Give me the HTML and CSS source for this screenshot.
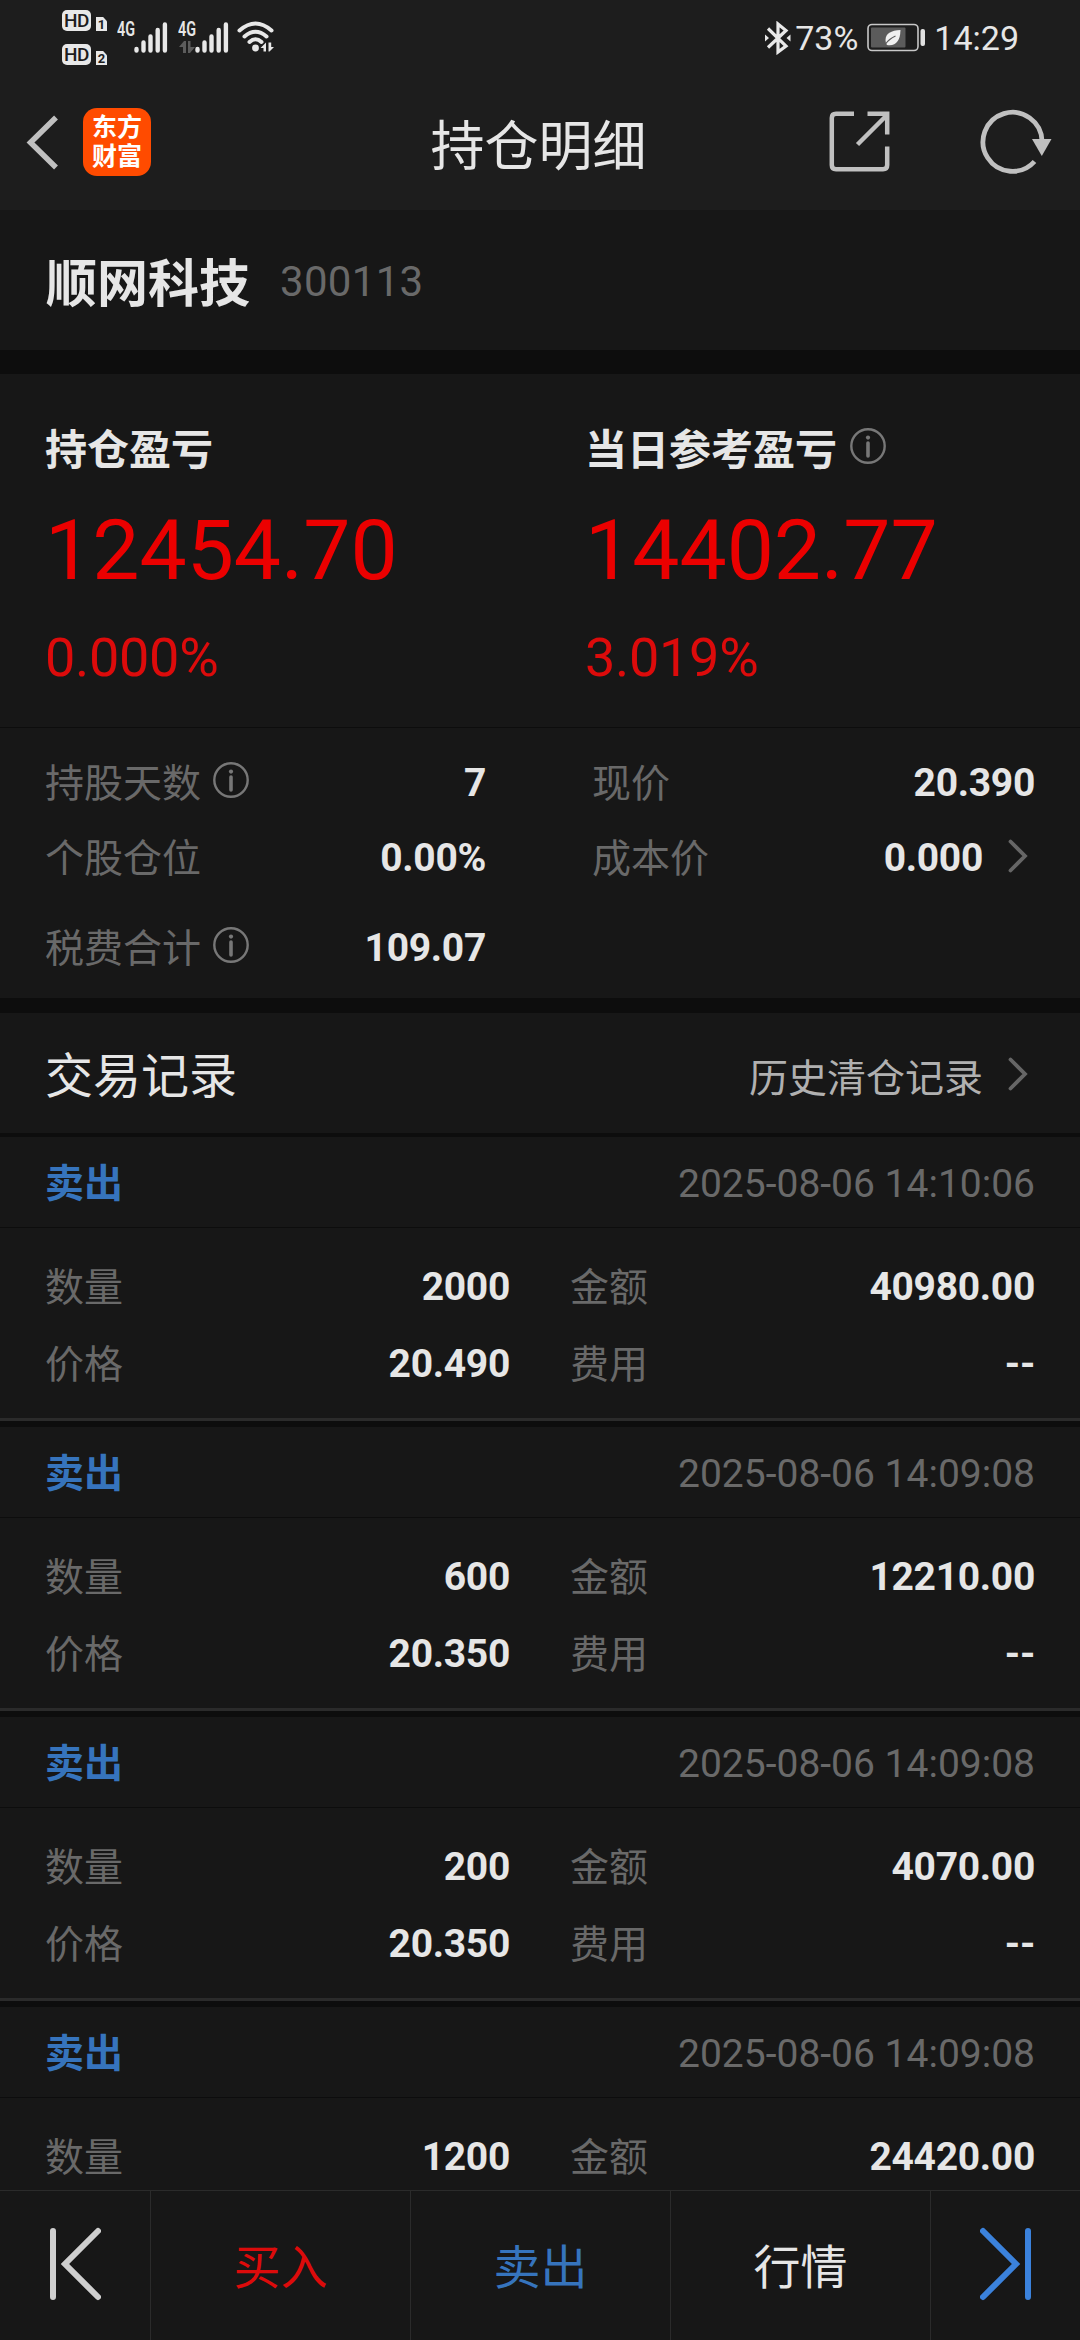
FILE: index.html
```html
<!DOCTYPE html>
<html lang="zh-CN">
<head>
  <meta charset="UTF-8">
  <meta name="viewport" content="width=device-width, initial-scale=1.0">
  <title>持仓明细</title>
  <link rel="stylesheet" href="styles.css">
</head>
<body>
  <svg class="defs" width="0" height="0">
    <symbol id="info" viewBox="0 0 36 36">
      <circle cx="18" cy="18" r="16.7" fill="none" stroke="#777" stroke-width="2.4"/>
      <circle cx="18" cy="9.6" r="2.1" fill="#777"/>
      <path d="M18 15v13" stroke="#777" stroke-width="3.6" stroke-linecap="round"/>
    </symbol>
    <symbol id="more" viewBox="0 0 20 34">
      <path d="M2.5 2.5L17 17L2.5 31.5" fill="none" stroke="#666" stroke-width="3.8" stroke-linecap="round"/>
    </symbol>
    <symbol id="signal" viewBox="0 0 34 31">
      <path d="M2.5 27v1.500M9.500 20.500v8M16.500 14.500v14M23.700 8v20.500M30.900 2.500v26" stroke="#e8e8e8" stroke-width="4.400" stroke-linecap="round"/>
    </symbol>
  </svg>

  <div class="status-bar">
    <div class="status-left">
      <div class="hd-list">
        <div class="hd"><span class="hd-tag">HD</span><span class="sim">1</span></div>
        <div class="hd"><span class="hd-tag">HD</span><span class="sim">2</span></div>
      </div>
      <div class="network">
        <span class="net-type">4G</span>
        <svg class="bars" width="34" height="31"><use href="#signal"/></svg>
      </div>
      <div class="network second">
        <span class="net-type">4G</span>
        <svg class="updown" width="16" height="12" viewBox="0 0 16 12" fill="#5c5c5c"><path d="M0 6L5 0H7V12H4V6ZM9 0h2.500v6H16L11 12H9Z"/></svg>
        <svg class="bars" width="34" height="31"><use href="#signal"/></svg>
      </div>
      <svg class="wifi" width="38" height="32" viewBox="0 0 38 32">
        <g fill="none" stroke="#e8e8e8" stroke-width="4" stroke-linecap="round">
          <path d="M2.500 9.500Q18.500 -4.500 34.500 9.500"/>
          <path d="M7.500 15.500Q18.500 6 29.500 15.500"/>
          <path d="M12.500 21Q18.500 15.500 24.500 21"/>
        </g>
        <circle cx="18.500" cy="27" r="3.400" fill="#e8e8e8"/>
        <path d="M23.500 27L29 21.500V30.500H26.500V27ZM31.500 21.500V30.500H32.500L37 26H34.200V21.500Z" fill="#e8e8e8"/>
      </svg>
    </div>
    <div class="status-right">
      <svg width="26" height="34" viewBox="0 0 26 34">
        <path d="M3 7.500L21 25L13 31V3L21 9.500L3 26.500" fill="none" stroke="#e8e8e8" stroke-width="3.200"/>
        <path d="M0 13.500L4 17L0 20.500ZM25.500 13.500L21.500 17L25.500 20.500Z" fill="#e8e8e8"/>
      </svg>
      <span class="percent">73%</span>
      <svg class="battery" width="60" height="30" viewBox="0 0 60 30">
        <rect x="1" y="1.500" width="50" height="26" rx="4" fill="none" stroke="#c8c8c8" stroke-width="1.600"/>
        <rect x="4" y="4.500" width="34.500" height="20" rx="1" fill="#5b5b5b"/>
        <path d="M33.500 7C24 7.500 18.500 10.500 18.500 17Q18.500 20 20 22Q33 24 33.500 7Z" fill="#f0f0f0"/>
        <path d="M18.500 21Q22 16 28.500 13" fill="none" stroke="#5b5b5b" stroke-width="1.200"/>
        <rect x="53.500" y="6" width="4.500" height="17" rx="2" fill="#e0e0e0"/>
      </svg>
      <span class="clock">14:29</span>
    </div>
  </div>

  <header class="nav">
    <div class="nav-left">
      <svg width="34" height="56" viewBox="0 0 34 56"><path d="M31 3.500L5.500 28.500L31 53.500" fill="none" stroke="#c0c0c0" stroke-width="5.500"/></svg>
      <div class="logo"><span>东方</span><span>财富</span></div>
    </div>
    <h1>持仓明细</h1>
    <div class="nav-right">
      <svg width="62" height="62" viewBox="0 0 62 62" fill="none" stroke="#c0c0c0" stroke-width="4.500">
        <path d="M25 2.800H7Q2.800 2.800 2.800 7V54Q2.800 58.200 7 58.200H54Q58.200 58.200 58.200 54V35.500"/>
        <path d="M38.500 2.800H58.200V23.500M28.500 33.500L58 4"/>
      </svg>
      <svg width="72" height="66" viewBox="0 0 72 66">
        <path d="M62 32A29.500 29.500 0 1 0 54.500 52.500" fill="none" stroke="#c0c0c0" stroke-width="4.800"/>
        <path d="M52 30H71.500L61.800 47Z" fill="#c0c0c0"/>
      </svg>
    </div>
  </header>

  <section class="stock">
    <span class="stock-name">顺网科技</span>
    <span class="stock-code">300113</span>
  </section>

  <section class="summary">
    <div class="profit">
      <div class="profit-label">持仓盈亏</div>
      <div class="profit-value">12454.70</div>
      <div class="profit-rate">0.000%</div>
    </div>
    <div class="profit">
      <div class="profit-label">当日参考盈亏<svg class="info"><use href="#info"/></svg></div>
      <div class="profit-value">14402.77</div>
      <div class="profit-rate">3.019%</div>
    </div>
  </section>

  <section class="stats">
    <div class="field"><label>持股天数<svg class="info"><use href="#info"/></svg></label><b>7</b></div>
    <div class="field"><label>现价</label><b>20.390</b></div>
    <div class="field"><label>个股仓位</label><b>0.00%</b></div>
    <div class="field"><label>成本价</label><b>0.000</b><svg class="more"><use href="#more"/></svg></div>
    <div class="field"><label>税费合计<svg class="info"><use href="#info"/></svg></label><b>109.07</b></div>
  </section>

  <div class="section-title">
    <h2>交易记录</h2>
    <a class="history">历史清仓记录<svg class="more"><use href="#more"/></svg></a>
  </div>

  <main class="records">
    <article class="record">
      <div class="record-head"><span class="side">卖出</span><time>2025-08-06 14:10:06</time></div>
      <div class="record-body">
        <div class="field"><label>数量</label><b>2000</b></div>
        <div class="field"><label>金额</label><b>40980.00</b></div>
        <div class="field"><label>价格</label><b>20.490</b></div>
        <div class="field"><label>费用</label><b>--</b></div>
      </div>
    </article>
    <article class="record">
      <div class="record-head"><span class="side">卖出</span><time>2025-08-06 14:09:08</time></div>
      <div class="record-body">
        <div class="field"><label>数量</label><b>600</b></div>
        <div class="field"><label>金额</label><b>12210.00</b></div>
        <div class="field"><label>价格</label><b>20.350</b></div>
        <div class="field"><label>费用</label><b>--</b></div>
      </div>
    </article>
    <article class="record">
      <div class="record-head"><span class="side">卖出</span><time>2025-08-06 14:09:08</time></div>
      <div class="record-body">
        <div class="field"><label>数量</label><b>200</b></div>
        <div class="field"><label>金额</label><b>4070.00</b></div>
        <div class="field"><label>价格</label><b>20.350</b></div>
        <div class="field"><label>费用</label><b>--</b></div>
      </div>
    </article>
    <article class="record">
      <div class="record-head"><span class="side">卖出</span><time>2025-08-06 14:09:08</time></div>
      <div class="record-body">
        <div class="field"><label>数量</label><b>1200</b></div>
        <div class="field"><label>金额</label><b>24420.00</b></div>
      </div>
    </article>
  </main>

  <footer class="toolbar">
    <div class="tool">
      <svg width="52" height="74" viewBox="0 0 52 74" fill="none" stroke="#cfcfcf" stroke-width="6" stroke-linecap="round"><path d="M4 4V70M49 4L16 37L49 70"/></svg>
    </div>
    <div class="tool buy">买入</div>
    <div class="tool sell">卖出</div>
    <div class="tool">行情</div>
    <div class="tool">
      <svg width="52" height="74" viewBox="0 0 52 74" fill="none" stroke="#3b82dc" stroke-width="6" stroke-linecap="round"><path d="M48 4V70M3 4L36 37L3 70"/></svg>
    </div>
  </footer>
</body>
</html>
```

FILE: styles.css
```css
* {
  box-sizing: border-box;
}

body {
  margin: 0;
  width: 1080px;
  height: 2340px;
  overflow: hidden;
  display: flex;
  flex-direction: column;
  background: #171717;
  color: #e6e6e6;
  font-family: Roboto, "Noto Sans CJK SC", sans-serif;
  font-size: 39px;
}

svg {
  display: block;
  flex: none;
}

.defs {
  position: absolute;
}

/* status bar */
.status-bar {
  height: 74px;
  flex: none;
  background: #1d1d1d;
  display: flex;
  justify-content: space-between;
  padding: 0 61px 0 62px;
}

.status-left {
  display: flex;
  align-items: flex-start;
}

.hd-list {
  padding-top: 10px;
  width: 55px;
}

.hd {
  display: flex;
  align-items: flex-end;
  gap: 5px;
  height: 21px;
  margin-bottom: 13px;
}

.hd-tag {
  width: 29px;
  height: 21px;
  line-height: 21px;
  border-radius: 5px;
  background: #e8e8e8;
  color: #1d1d1d;
  font-size: 19px;
  font-weight: 500;
  letter-spacing: -0.5px;
  text-align: center;
}

.sim {
  width: 11px;
  height: 14px;
  line-height: 15px;
  background: #e8e8e8;
  color: #1d1d1d;
  font-size: 13px;
  font-weight: 700;
  text-align: center;
  clip-path: polygon(0 0, 65% 0, 100% 30%, 100% 100%, 0 100%);
}

.network {
  position: relative;
  width: 61px;
  height: 74px;
  padding: 21.500px 0 0 17px;
}

.net-type {
  position: absolute;
  left: 0;
  top: 19px;
  font-size: 20px;
  line-height: 20px;
  font-weight: 600;
  transform: scaleX(0.72);
  transform-origin: 0 0;
}

.updown {
  position: absolute;
  left: 1px;
  top: 41px;
}

.second {
  width: 59px;
}

.wifi {
  margin-top: 21px;
}

.status-right {
  display: flex;
  align-items: center;
  height: 74px;
  padding-top: 1px;
  font-size: 34px;
}

.percent {
  margin-left: 4px;
}

.battery {
  margin: 0 7px 0 9px;
}

/* navigation */
.nav {
  height: 136px;
  flex: none;
  background: #1d1d1d;
  display: grid;
  grid-template-columns: 1fr auto 1fr;
  align-items: center;
  padding: 0 28px 0 25px;
}

.nav-left,
.nav-right {
  display: flex;
  align-items: center;
}

.nav-left {
  gap: 24px;
}

.nav-right {
  justify-content: flex-end;
  gap: 89px;
}

.logo {
  width: 68px;
  height: 68px;
  border-radius: 14px;
  background: #ff4b00;
  color: #fff;
  display: flex;
  flex-direction: column;
  align-items: center;
  justify-content: center;
  font-size: 25px;
  font-weight: 700;
  line-height: 29px;
}

.nav h1 {
  margin: 0;
  font-size: 54px;
  font-weight: 400;
}

/* stock */
.stock {
  height: 140px;
  flex: none;
  display: flex;
  align-items: center;
  gap: 30px;
  padding-left: 46px;
}

.stock-name {
  margin-top: -1px;
  font-size: 51px;
  font-weight: 700;
}

.stock-code {
  padding-top: 2px;
  font-size: 42px;
  letter-spacing: 0.3px;
  color: #696969;
}

/* profit and loss */
.summary {
  height: 377px;
  flex: none;
  display: grid;
  grid-template-columns: 1fr 1fr;
  border-top: 24px solid #0d0d0d;
}

.profit {
  padding: 42px 0 0 45px;
}

.profit-label {
  display: flex;
  align-items: center;
  gap: 13px;
  height: 60px;
  font-size: 42px;
  font-weight: 700;
}

.info {
  width: 36px;
  height: 36px;
}

.profit-value {
  height: 100px;
  margin-top: 25px;
  line-height: 100px;
  font-size: 84px;
  color: #eb0000;
}

.profit-rate {
  height: 60px;
  margin-top: 27px;
  line-height: 60px;
  font-size: 54px;
  letter-spacing: -0.3px;
  color: #dc0b0b;
}

/* label and value pairs */
.stats {
  height: 286px;
  flex: none;
  display: grid;
  grid-template-columns: 441px 443px;
  grid-template-rows: 75px 75px 105px;
  column-gap: 106px;
  padding: 17px 45px 0;
  border-top: 1px solid #0d0d0d;
  border-bottom: 15px solid #0d0d0d;
}

.field {
  display: flex;
  align-items: center;
  justify-content: space-between;
}

.field label {
  display: flex;
  align-items: center;
  gap: 12px;
  padding-bottom: 5px;
  color: #696969;
}

.field b {
  font-weight: 700;
  letter-spacing: -0.3px;
}

.stats .field b {
  margin-left: auto;
}

.more {
  width: 20px;
  height: 34px;
  margin: -3px 7px 0 25px;
}

/* trade records */
.section-title {
  height: 124px;
  flex: none;
  display: flex;
  align-items: center;
  justify-content: space-between;
  padding: 0 45px;
  border-bottom: 4px solid #0d0d0d;
}

.section-title h2 {
  margin: -3px 0 0;
  font-size: 48px;
  font-weight: 400;
}

.history {
  display: flex;
  align-items: center;
  margin-top: 4px;
  color: #b0b0b0;
}

.records {
  flex: 1;
  min-height: 0;
  overflow: hidden;
}

.record {
  height: 290px;
  border-bottom: 6px solid #0d0d0d;
}

.record-head {
  height: 91px;
  display: flex;
  align-items: center;
  justify-content: space-between;
  padding: 0 45px;
  border-bottom: 1px solid #0d0d0d;
}

.side {
  padding-bottom: 4px;
  color: #3674bd;
  font-weight: 700;
}

.record-head time {
  padding-top: 3px;
  color: #696969;
}

.record-body {
  height: 193px;
  display: grid;
  grid-template-columns: 1fr 1fr;
  grid-auto-rows: 77px;
  column-gap: 60px;
  padding: 20px 45px 0;
  border-bottom: 3px solid #2b2b2b;
}

/* bottom toolbar */
.toolbar {
  height: 150px;
  flex: none;
  display: grid;
  grid-template-columns: 151px 260px 260px 260px 149px;
  border-top: 1px solid #2b2b2b;
}

.tool {
  display: flex;
  align-items: center;
  justify-content: center;
  padding-bottom: 4px;
  border-right: 1px solid #2b2b2b;
  font-size: 47px;
}

.tool:last-child {
  border-right: 0;
}

.buy {
  color: #dc0b0b;
}

.sell {
  color: #3674bd;
}
```
